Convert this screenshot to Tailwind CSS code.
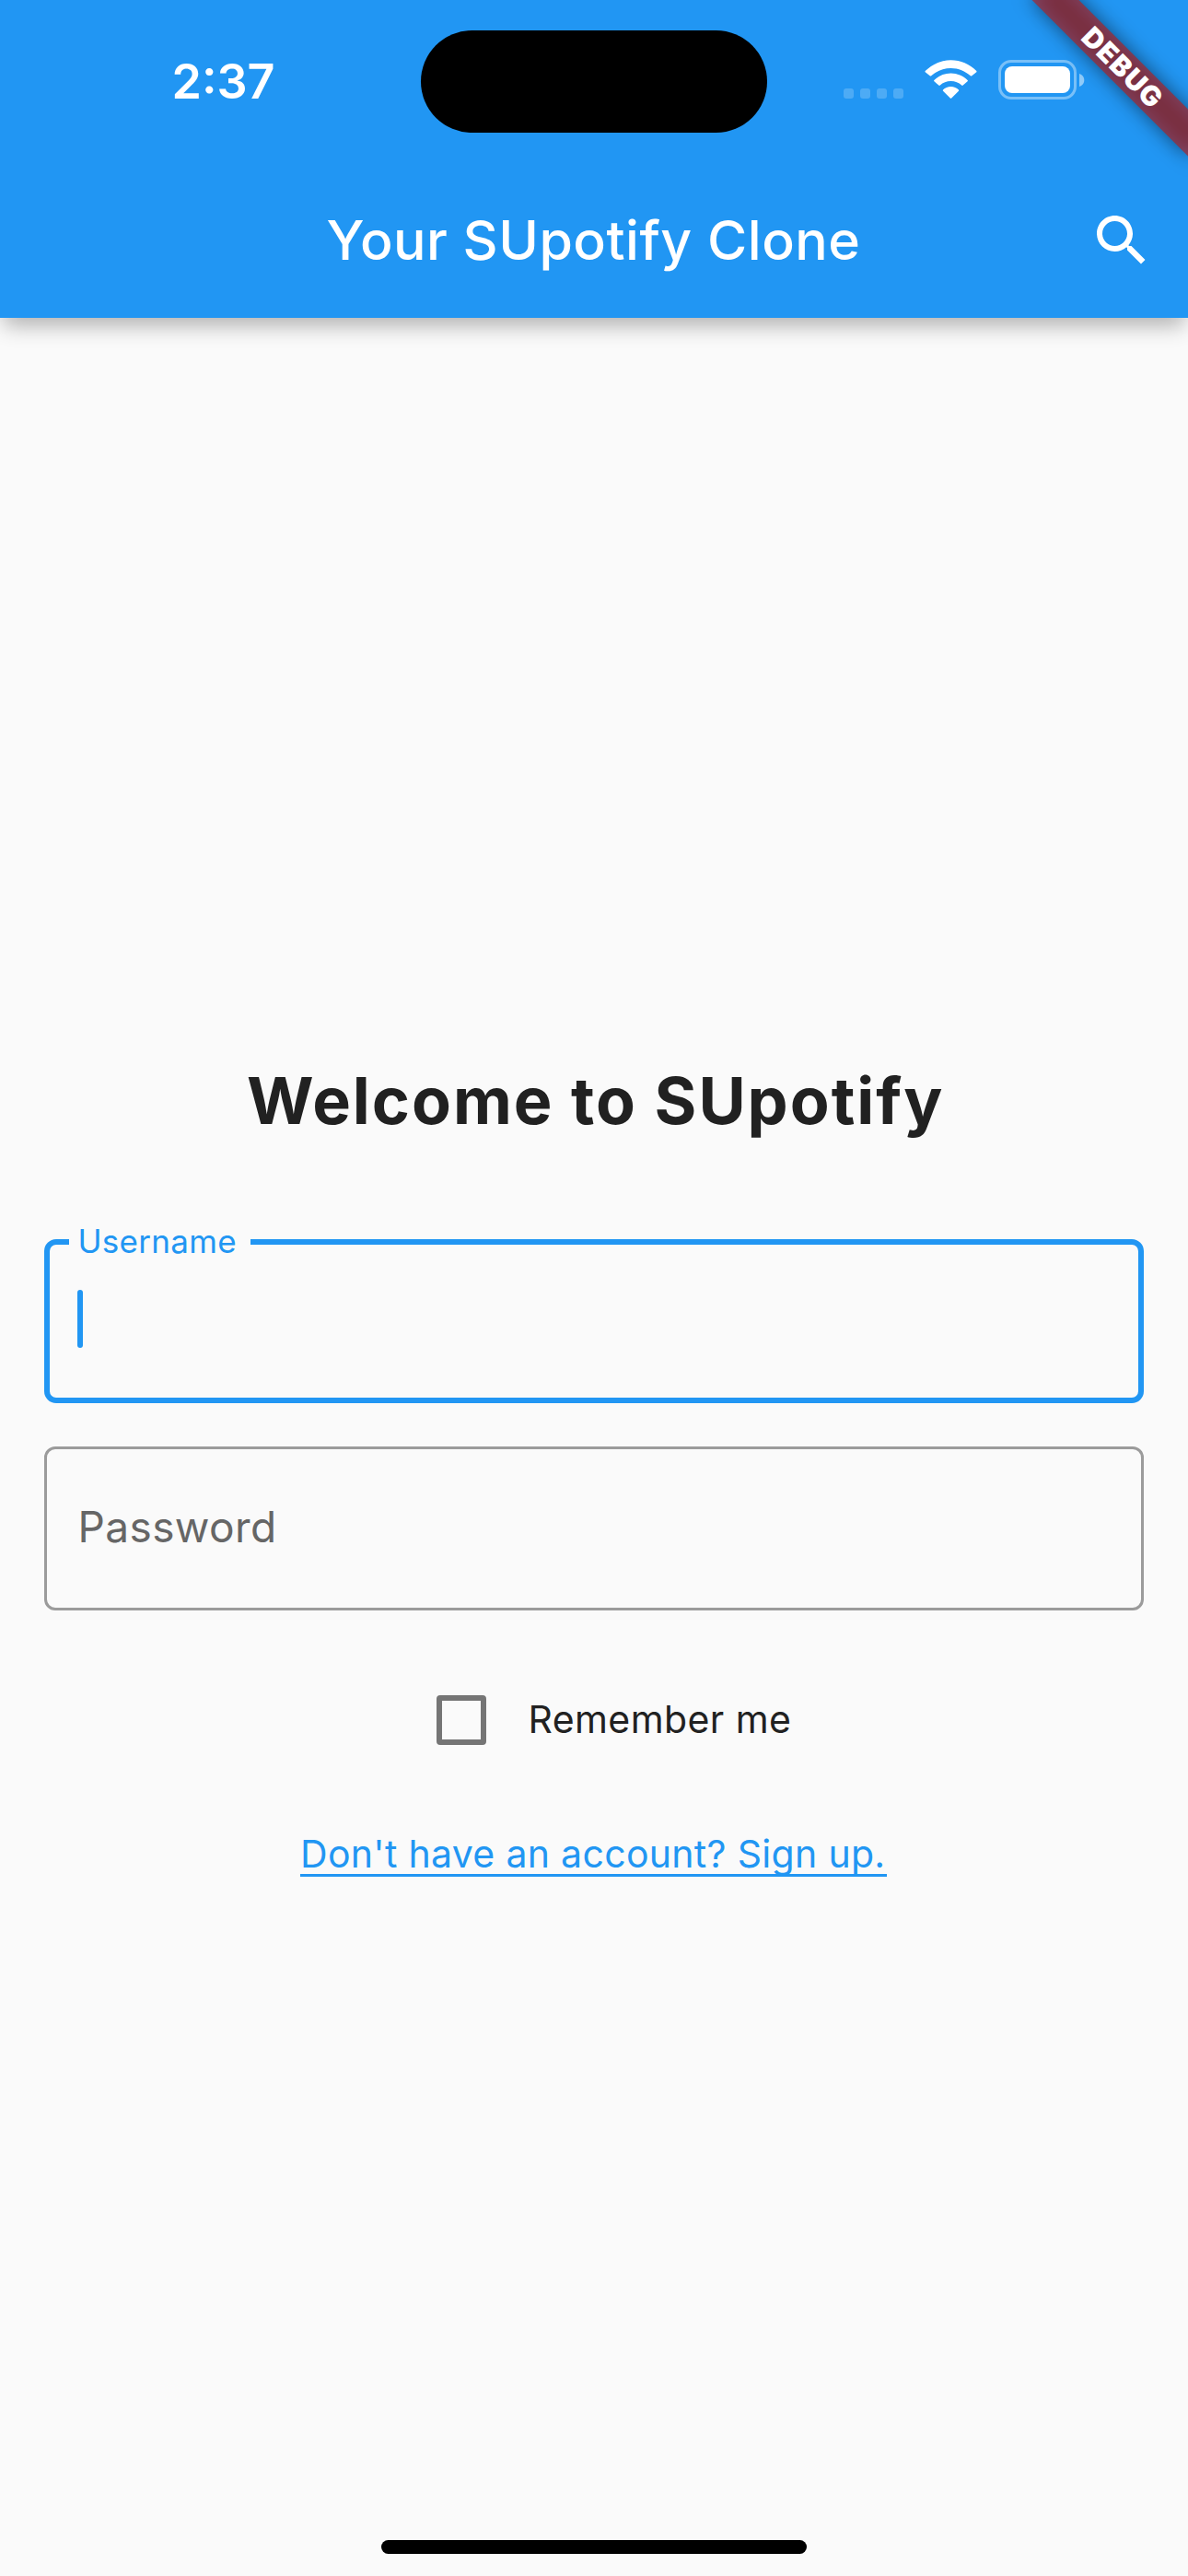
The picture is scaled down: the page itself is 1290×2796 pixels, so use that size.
<!DOCTYPE html>
<html lang="en">
<head>
<meta charset="utf-8">
<title>SUpotify Clone</title>
<script src="https://cdn.jsdelivr.net/npm/@tailwindcss/browser@4"></script>
</head>
<body class="relative flex h-[2796px] w-[1290px] flex-col overflow-hidden bg-[#fafafa] font-['Inter',sans-serif]">
  <header class="relative z-10 flex h-[345px] shrink-0 flex-col bg-[#2196f3] text-white shadow-[0_12px_22px_-4px_rgba(0,0,0,0.3)]">
    <!-- status bar -->
    <div class="flex h-[177px] items-start">
      <div class="w-[457px] pt-[59px] pl-[186.5px] text-[52px] leading-[60px] font-semibold">2:37</div>
      <div class="mt-[33.3px] h-[111px] w-[376px] rounded-full bg-black"></div>
      <div class="mt-[65px] ml-[83px] flex h-[43px] items-end gap-[7px] pb-px">
        <span class="size-[11px] rounded-[3px] bg-white/20"></span>
        <span class="size-[11px] rounded-[3px] bg-white/20"></span>
        <span class="size-[11px] rounded-[3px] bg-white/20"></span>
        <span class="size-[11px] rounded-[3px] bg-white/20"></span>
      </div>
      <svg class="mt-[65px] ml-[22px] h-[43px] w-[59px]" viewBox="0 0 59 43" fill="#fff">
        <path d="M29.5 8.900c8.200 0 15.700 3.200 21.300 8.400.4.4 1.100.4 1.500 0l5.300-4.400-.3-.9C49.800 4.600 40 .3 29.500.3S9.200 4.600 1.700 12l-.3.900 5.300 4.400c.4.4 1.100.4 1.500 0 5.600-5.200 13.100-8.400 21.300-8.400z"/>
        <path d="M29.500 23.100c4.500 0 8.600 1.700 11.700 4.500.4.4 1.100.4 1.500 0l4.900-4.300c.4-.4.4-.9 0-1.300-4.800-4.600-11.200-7.400-18.100-7.400s-13.300 2.800-18.100 7.400c-.4.4-.4.9 0 1.300l4.900 4.300c.4.4 1.100.4 1.500 0 3.100-2.800 7.200-4.500 11.700-4.500z"/>
        <path d="M38 32.500c.4.400.3.900 0 1.200l-7.800 7.800c-.4.4-1 .4-1.400 0L21 33.700c-.3-.3-.4-.8 0-1.200 2.200-2.300 5.300-3.600 8.500-3.600s6.300 1.300 8.500 3.600z"/>
      </svg>
      <div class="mt-[65px] ml-[22px] flex h-[43px] items-center gap-[3px]">
        <div class="h-[43px] w-[85px] rounded-[14px] border-3 border-white/40 p-[4px]">
          <div class="h-[29px] w-[71px] rounded-[8px] bg-white"></div>
        </div>
        <svg class="h-[14px] w-[6px]" viewBox="0 0 6 14"><path d="M0 0C3 1 5.300 3.600 5.300 7S3 13 0 14z" fill="#fff" fill-opacity=".5"/></svg>
      </div>
    </div>
    <!-- toolbar -->
    <div class="flex h-[168px] items-center justify-between pr-[36px] pl-[354.5px]">
      <h1 class="text-[59px] leading-[80px] font-medium tracking-[0.5px] whitespace-nowrap">Your SUpotify Clone</h1>
      <svg class="size-[72px]" viewBox="0 0 24 24" fill="#fff"><path d="M15.500 14h-.79l-.28-.27C15.410 12.590 16 11.110 16 9.500 16 5.910 13.090 3 9.500 3S3 5.910 3 9.500 5.910 16 9.500 16c1.610 0 3.090-.59 4.230-1.570l.27.28v.79l5 4.990L20.490 19l-4.990-5zm-6 0C7.010 14 5 11.990 5 9.500S7.010 5 9.500 5 14 7.010 14 9.500 11.990 14 9.500 14z"/></svg>
    </div>
  </header>

  <main class="flex flex-1 flex-col px-[48px] pt-[800px]">
    <h2 class="pl-[220px] text-[70px] leading-[100px] font-bold tracking-[2px] whitespace-nowrap text-[#212121]">Welcome to SUpotify</h2>

    <div class="relative mt-[100.3px] h-[177.4px] rounded-[13px] border-6 border-[#2196f3]">
      <label class="absolute -top-[27px] left-[21px] w-[197px] bg-[#fafafa] pl-[9.500px] text-[35px] leading-[47px] tracking-[0.3px] text-[#2196f3]">Username</label>
      <div class="mt-[48.500px] ml-[30px] h-[63px] w-[6px] rounded-full bg-[#2196f3]"></div>
    </div>

    <div class="mt-[47.500px] flex h-[177.500px] items-center rounded-[12px] border-3 border-[#9b9b9b] pl-[33.500px] text-[46px] leading-[60px] tracking-[0.4px] text-[#666]"><span class="-mt-[3px]">Password</span></div>

    <label class="mt-[92.500px] ml-[426px] flex h-[54px] items-center gap-[45.500px]">
      <span class="size-[54px] rounded-[4px] border-6 border-[#757575]"></span>
      <span class="-mt-[2px] text-[41px] leading-[54px] tracking-[0.42px] text-[#212121]">Remember me</span>
    </label>

    <a class="mt-[94px] ml-[277.500px] h-[49px] w-[637px] border-b-3 border-[#2196f3] pl-[0.500px] text-[41px] leading-[48px] tracking-[0.31px] whitespace-nowrap text-[#2196f3]">Don't have an account? Sign up.</a>
  </main>

  <div class="mb-[24px] ml-[414px] h-[15px] w-[462px] rounded-full bg-black"></div>

  <!-- corner banner -->
  <div class="absolute top-[54px] left-[1098px] z-20 h-[36px] w-[240px] rotate-45">
    <div class="absolute inset-0 bg-black/50 blur-[10.500px]"></div>
    <div class="relative flex h-full items-center justify-center bg-[#b71c1c]/63 pl-[4px] text-[30px] leading-none font-black tracking-[1.2px] text-white">DEBUG</div>
  </div>
</body>
</html>
